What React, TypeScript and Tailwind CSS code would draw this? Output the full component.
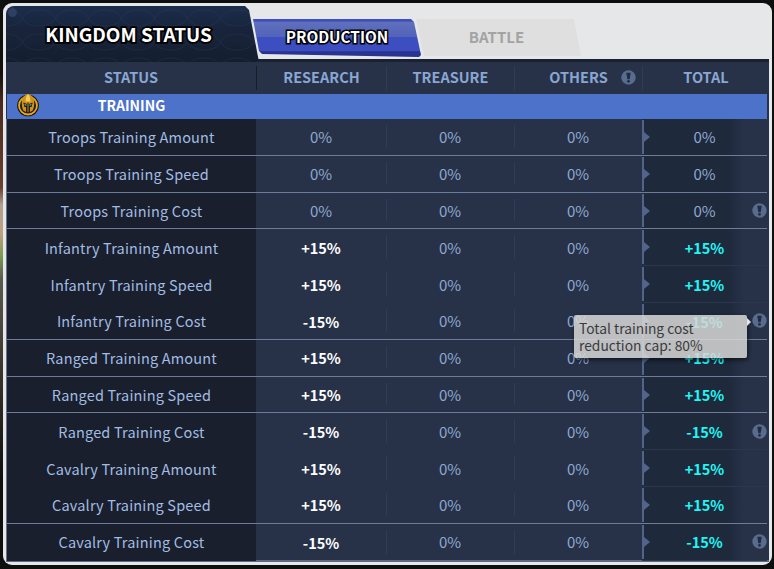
const font = 'font-["Noto_Sans_CJK_KR","Noto_Sans",sans-serif]';

type Row = {
  label: string;
  research: string;
  total: string;
  line: boolean; // strong line under the row, otherwise only a faint one in total
  warn?: boolean;
};

const rows: Row[] = [
  { label: 'Troops Training Amount', research: '0%', total: '0%', line: true },
  { label: 'Troops Training Speed', research: '0%', total: '0%', line: true },
  { label: 'Troops Training Cost', research: '0%', total: '0%', line: true, warn: true },
  { label: 'Infantry Training Amount', research: '+15%', total: '+15%', line: false },
  { label: 'Infantry Training Speed', research: '+15%', total: '+15%', line: false },
  { label: 'Infantry Training Cost', research: '-15%', total: '-15%', line: true, warn: true },
  { label: 'Ranged Training Amount', research: '+15%', total: '+15%', line: true },
  { label: 'Ranged Training Speed', research: '+15%', total: '+15%', line: true },
  { label: 'Ranged Training Cost', research: '-15%', total: '-15%', line: false, warn: true },
  { label: 'Cavalry Training Amount', research: '+15%', total: '+15%', line: false },
  { label: 'Cavalry Training Speed', research: '+15%', total: '+15%', line: true },
  { label: 'Cavalry Training Cost', research: '-15%', total: '-15%', line: false, warn: true },
];

function Warn({ className }: { className?: string }) {
  return (
    <svg width="15" height="15" viewBox="0 0 15 15" className={className}>
      <circle cx="7.5" cy="7.5" r="7.2" fill="#5a6c8e" />
      <path d="M5.300 2.800h4.400l-1 6.400H6.300z" fill="#222c40" />
      <circle cx="7.500" cy="11.300" r="1.400" fill="#222c40" />
    </svg>
  );
}

function Helmet() {
  return (
    <svg width="22" height="24" viewBox="0 0 22 24" className="absolute left-[10px] top-[-1.500px]">
      <circle cx="11" cy="12.500" r="10.800" fill="#120d06" />
      <circle cx="11" cy="12.500" r="9" fill="#2a2110" stroke="#e6a81f" strokeWidth="1.800" />
      <path d="M11 1c4.500 1.200 6.200 4.800 6.200 9 0 3-.6 5.500-1.600 7.500l-2.600 1.500v-5H9v5l-2.600-1.500c-1-2-1.600-4.500-1.600-7.500 0-4.200 1.700-7.800 6.200-9z" fill="#d1921c" />
      <path d="M11 1c2 1.500 2.300 4.500 2.300 7.500H8.700C8.700 5.500 9 2.500 11 1z" fill="#f5cc55" />
      <path d="M6.300 9.500l3.700 1.500v3H7.500zM15.700 9.500L12 11v3h2.500z" fill="#141a22" />
      <path d="M7.500 10.800l2 .9v1.100l-1.700-.5zM14.500 10.800l-2 .9v1.100l1.700-.5z" fill="#35d0e8" />
      <rect x="10" y="9.500" width="2" height="9.500" fill="#7d5210" />
    </svg>
  );
}

// scalloped scales on the title tab
function Scales() {
  return (
    <svg className="absolute inset-0 h-full w-full opacity-20" aria-hidden>
      <defs>
        <pattern id="scales" width="33" height="24" patternUnits="userSpaceOnUse">
          <path d="M0 4c8 0 14 3 16.500 8C19 7 25 4 33 4M16.500 12c-2.500 5-8 8-16.500 8M16.500 12c2.500 5 8 8 16.500 8" fill="none" stroke="#3a4e74" strokeWidth="1" />
        </pattern>
      </defs>
      <rect width="100%" height="100%" fill="url(#scales)" />
    </svg>
  );
}

function Cell({ children, divider }: { children: string; divider?: boolean }) {
  return (
    <div className="relative flex items-center justify-center pt-px text-[15px] text-[#90a8cf]">
      {children}
      {divider && <span className="absolute right-[-1px] top-[6px] bottom-[7px] w-px bg-[#303c57]" />}
    </div>
  );
}

export default function App() {
  return (
    <div className={`${font} flex h-[569px] w-[774px] overflow-hidden bg-[#0d0f0e] pr-[2px]`}>
      <div className="h-full w-[3px] shrink-0 bg-[linear-gradient(180deg,#0e100f_0%,#14100e_13%,#4a2a20_18%,#6a4030_33%,#b0a090_36%,#c0a080_41%,#7a9a50_45%,#5a5a50_49%,#302a25_70%,#0d0f0e_84%,#0d0f0e_100%)]" />
      <div className="relative mt-[3px] flex h-[562px] flex-1 flex-col overflow-hidden rounded-[9px] bg-[#e6e7e9] p-[3px]">
        {/* Top tabs */}
        <div className="flex h-[53px] shrink-0 items-start">
          <div className="relative z-10 flex h-[56px] w-[253px] shrink-0 items-center justify-center overflow-hidden rounded-tl-[8px] bg-[linear-gradient(180deg,#1c2e4c_0%,#19253c_40%,#161f30_100%)] [clip-path:polygon(0_0,239px_0,243px_4px,253px_56px,0_56px)]">
            <Scales />
            <span className="absolute left-[2px] top-[2px] size-[9px] rounded-full bg-[#2d3f62]" />
            <span className="relative mb-[2px] mr-[8px] text-[19px] font-bold leading-none text-white [-webkit-text-stroke:3.500px_black] [paint-order:stroke_fill]">
              KINGDOM STATUS
            </span>
          </div>
          <div className="relative z-[2] ml-[-6px] mt-[13px] flex h-[38px] w-[168px] shrink-0 items-center justify-center bg-[linear-gradient(180deg,#3f50bd_0%,#3f50bd_6%,#6070bb_8%,#5263bb_46%,#3d4ec0_48%,#3d4ec0_84%,#28348f_86%,#28348f_100%)] pb-[2px] [clip-path:polygon(0_0,158px_0,161px_3px,168px_36px,166px_38px,9px_35px,6px_32px)]">
            <span className="text-[15.300px] font-bold leading-none text-white [-webkit-text-stroke:3px_black] [paint-order:stroke_fill]">
              PRODUCTION
            </span>
          </div>
          <div className="relative z-[1] ml-[-5px] mt-[13px] flex h-[37px] w-[165px] shrink-0 items-center justify-center bg-[#dfdfe0] pb-[2px] [clip-path:polygon(0_0,158px_0,165px_37px,8px_37px)]">
            <span className="pr-[4px] text-[15px] font-bold leading-none text-[#a3a3a3]">BATTLE</span>
          </div>
        </div>

        {/* Table */}
        <div className="flex min-h-0 flex-1 flex-col border-b-[2px] border-t-[3px] border-b-[#5f6a82] border-t-[#1a2232] bg-[#273249]">
          <div className="grid h-[31px] shrink-0 grid-cols-[251px_130px_128px_128px_1fr] text-[14.500px] font-bold text-[#8aa6d3]">
            <div className="my-[4px] flex items-center justify-center border-r border-[#161d2b] pb-[2px]">STATUS</div>
            <div className="my-[4px] flex items-center justify-center border-r border-[#303c57] pb-[2px]">RESEARCH</div>
            <div className="my-[4px] flex items-center justify-center border-r border-[#303c57] pb-[2px]">TREASURE</div>
            <div className="relative my-[4px] flex items-center justify-center border-r border-[#303c57] pb-[2px]">
              OTHERS
              <Warn className="absolute right-[6px] top-[4px]" />
            </div>
            <div className="flex items-center justify-center pb-[2px]">TOTAL</div>
          </div>

          <div className="ml-px mr-[2px] mt-px flex h-[25px] shrink-0 items-center bg-[#4d72c9]">
            <div className="relative flex h-full w-[249px] items-center justify-center pb-[2px] text-[14px] font-bold text-white">
              <Helmet />
              TRAINING
            </div>
          </div>

          <div className="flex-1 border-l border-[#66738e]">
            {rows.map((row) => {
              const signed = row.total !== '0%';
              return (
                <div key={row.label} className="grid h-[36.8px] grid-cols-[249px_130px_128px_128px_1fr]">
                  <div className={`flex items-center justify-center bg-[#191f2c] text-[14.500px] tracking-[0.18px] text-[#a2bce3] ${row.line ? 'border-b border-[#6e7c9b]' : ''}`}>
                    {row.label}
                  </div>
                  <div className={`relative flex items-center justify-center pt-px ${signed ? 'text-[14.500px] font-bold text-white' : 'text-[15px] text-[#90a8cf]'} ${row.line ? 'border-b border-[#6e7c9b]' : ''}`}>
                    {row.research}
                    <span className="absolute right-[-1px] top-[6px] bottom-[7px] w-px bg-[#303c57]" />
                  </div>
                  <div className={`grid ${row.line ? 'border-b border-[#6e7c9b]' : ''}`}>
                    <Cell divider>0%</Cell>
                  </div>
                  <div className={`grid ${row.line ? 'border-b border-[#6e7c9b]' : ''}`}>
                    <Cell>0%</Cell>
                  </div>
                  <div className={`relative mr-[2px] flex items-center justify-center bg-[linear-gradient(90deg,#1e293c_0%,#1e293c_69%,#273249_82%)] pt-px ${signed ? 'text-[14.500px] font-bold text-[#1ef7f5]' : 'text-[15px] text-[#90a8cf]'} ${row.line ? 'border-b border-[#6e7c9b]' : 'border-b border-[#2b3650]'}`}>
                    <span className="absolute bottom-[1px] left-0 top-[1px] w-[2px] bg-[#52648a]" />
                    <span className="absolute left-[2px] top-[13px] h-0 w-0 border-y-[5px] border-l-[6px] border-y-transparent border-l-[#52648a]" />
                    {row.total}
                    {row.warn && <Warn className="absolute right-0 top-[10.500px]" />}
                  </div>
                </div>
              );
            })}
          </div>
        </div>

        {/* Tooltip over the total column */}
        <div className="absolute left-[571px] top-[312px] z-20 h-[43px] w-[173px] rounded-[2px] bg-[#d8d8d7]/85 px-[5px] pt-[5px] text-[13.800px] leading-[17px] text-[#3b3b3b] shadow-[1px_2px_4px_rgba(0,0,0,0.6)]">
          Total training cost
          <br />
          reduction cap: 80%
          <span className="absolute right-[-4px] top-[3px] h-0 w-0 border-y-[4px] border-l-[4px] border-y-transparent border-l-[#e6e6e6]" />
        </div>
      </div>
    </div>
  );
}
